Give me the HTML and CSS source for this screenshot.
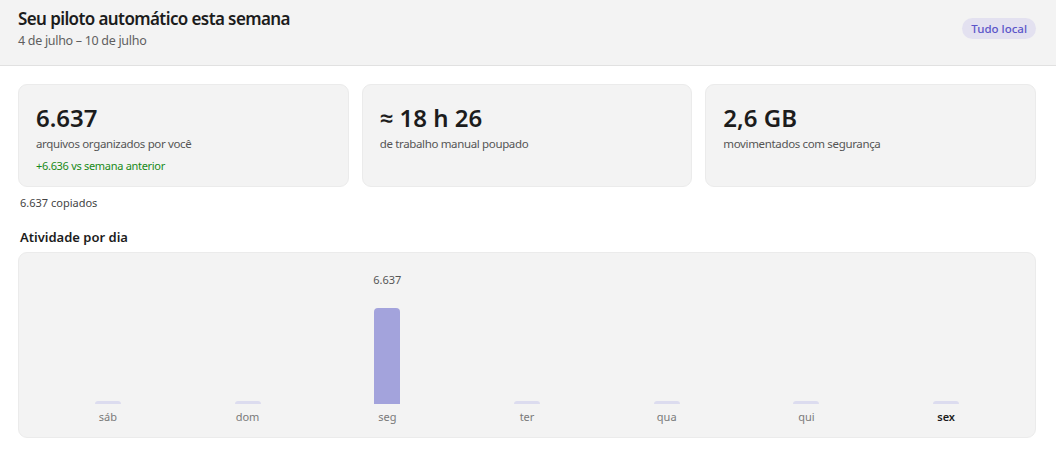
FILE: index.html
```html
<!DOCTYPE html>
<html lang="pt">
<head>
<meta charset="utf-8">
<link rel="stylesheet" href="styles.css">
</head>
<body>
<header class="top">
  <div class="top-text">
    <h1 class="title">Seu piloto automático esta semana</h1>
    <div class="range">4 de julho – 10 de julho</div>
  </div>
  <span class="pill">Tudo local</span>
</header>
<main class="main">
  <section class="cards">
    <div class="card">
      <div class="big">6.637</div>
      <div class="label">arquivos organizados por você</div>
      <div class="delta">+6.636 vs semana anterior</div>
    </div>
    <div class="card">
      <div class="big">≈ 18 h 26</div>
      <div class="label">de trabalho manual poupado</div>
    </div>
    <div class="card">
      <div class="big">2,6 GB</div>
      <div class="label">movimentados com segurança</div>
    </div>
  </section>
  <div class="copied">6.637 copiados</div>
  <h2 class="section-title">Atividade por dia</h2>
  <section class="chart">
    <div class="col"><div class="bar empty" style="height:3px"></div><div class="day">sáb</div></div>
    <div class="col"><div class="bar empty" style="height:3px"></div><div class="day">dom</div></div>
    <div class="col"><div class="value">6.637</div><div class="bar" style="height:96px"></div><div class="day">seg</div></div>
    <div class="col"><div class="bar empty" style="height:3px"></div><div class="day">ter</div></div>
    <div class="col"><div class="bar empty" style="height:3px"></div><div class="day">qua</div></div>
    <div class="col"><div class="bar empty" style="height:3px"></div><div class="day">qui</div></div>
    <div class="col"><div class="bar empty" style="height:3px"></div><div class="day today">sex</div></div>
  </section>
</main>
</body>
</html>
```

FILE: styles.css
```css
* { box-sizing: border-box; }
html, body { margin: 0; padding: 0; }
body {
  font-family: "Noto Sans", "Open Sans", sans-serif;
  color: #1f1f1f;
  background: #ffffff;
  width: 1056px;
  height: 456px;
  overflow: hidden;
}
.top {
  height: 66px;
  background: #f3f3f3;
  border-bottom: 1px solid #e1e1e1;
  display: flex;
  justify-content: space-between;
  align-items: flex-start;
  padding: 7px 20px 0 18px;
}
.title {
  margin: 0;
  font-size: 17px;
  font-weight: 600;
  line-height: 24px;
  letter-spacing: -0.6px;
  color: #1c1c1c;
}
.range {
  font-size: 12.5px;
  line-height: 18px;
  letter-spacing: -0.3px;
  color: #5f5f5f;
  margin-top: 1px;
}
.pill {
  margin-top: 11px;
  background: #e3e1f0;
  color: #5b55c9;
  font-size: 11.5px;
  font-weight: 500;
  line-height: 21px;
  padding: 0 9px;
  border-radius: 11px;
}
.main {
  padding: 18px 20px 0 18px;
}
.cards {
  display: grid;
  grid-template-columns: repeat(3, 1fr);
  gap: 13px;
}
.card {
  height: 103px;
  background: #f3f3f3;
  border: 1px solid #ebebeb;
  border-radius: 9px;
  padding: 17px 17px 0 17px;
}
.big {
  font-size: 24px;
  font-weight: 600;
  line-height: 32px;
  color: #1c1c1c;
}
.label {
  font-size: 11.5px;
  line-height: 18px;
  letter-spacing: -0.35px;
  color: #555;
  margin-top: 1px;
}
.delta {
  font-size: 11px;
  line-height: 18px;
  letter-spacing: -0.3px;
  color: #188a18;
  margin-top: 4px;
}
.copied {
  font-size: 11px;
  line-height: 16px;
  color: #444;
  margin: 8px 0 0 2px;
}
.section-title {
  margin: 17px 0 0 2px;
  font-size: 13px;
  font-weight: 600;
  line-height: 18px;
  color: #1c1c1c;
}
.chart {
  margin-top: 6px;
  height: 186px;
  background: #f3f3f3;
  border: 1px solid #ebebeb;
  border-radius: 9px;
  padding: 0 19px 12px;
  display: grid;
  grid-template-columns: repeat(7, 1fr);
  align-items: end;
}
.col {
  display: flex;
  flex-direction: column;
  align-items: center;
}
.value {
  font-size: 11px;
  line-height: 16px;
  color: #555;
  margin-bottom: 20px;
}
.bar {
  width: 26px;
  background: #a3a3dc;
  border-radius: 4px 4px 0 0;
}
.bar.empty {
  background: #dcdcef;
}
.day {
  margin-top: 5px;
  font-size: 11px;
  line-height: 16px;
  color: #7a7a7a;
}
.day.today {
  color: #1c1c1c;
  font-weight: 600;
}
```
